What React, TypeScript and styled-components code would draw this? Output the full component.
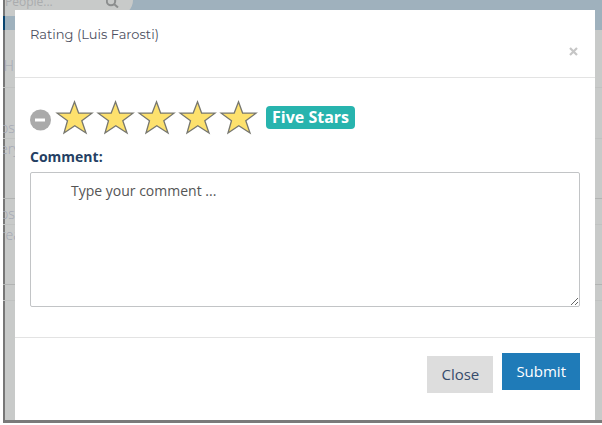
import React, { useState } from "react";
import styled, { createGlobalStyle } from "styled-components";

const GlobalStyle = createGlobalStyle`
  * { box-sizing: border-box; }
  body {
    margin: 0;
    background: #fff;
    color: #243f63;
    font-family: "Open Sans", "Noto Sans", sans-serif;
    font-size: 14px;
    line-height: 20px;
  }
  button, textarea, input { font-family: inherit; }
`;

const Screen = styled.div`
  position: relative;
  margin-left: 3px;
  padding: 10px 7px 0 10px;
  border-left: 2px solid #777;
  border-bottom: 3px solid #7a7a7a;
  background: #c8cac9;
`;

const Backdrop = styled.div`
  position: absolute;
  inset: 0 0 0 -2px;
  overflow: hidden;
  color: #a3a7b4;
`;

const TopBar = styled.div`
  height: 30px;
  border-left: 2px solid #07436f;
  background: #9fb1bd;
`;

const SearchBox = styled.div`
  display: flex;
  align-items: flex-start;
  justify-content: space-between;
  width: 130px;
  height: 16px;
  margin-left: -2px;
  padding-right: 14px;
  border-left: 2px solid #777;
  border-radius: 0 0 16px 0;
  background: #c8cac9;
  color: #aaacae;
  font-size: 12px;
  line-height: 4px;
`;

const SearchIcon = styled.svg`
  width: 13px;
  height: 8px;
`;

const Feed = styled.div`
  margin-left: -3px;
  font-weight: 300;
`;

const FeedRow = styled.div<{ $height: number; $faint?: boolean; $align?: string; $inset?: number }>`
  display: flex;
  align-items: ${(p) => p.$align ?? "flex-end"};
  height: ${(p) => p.$height}px;
  padding-bottom: ${(p) => p.$inset ?? 0}px;
  border-bottom: 1px solid ${(p) => (p.$faint ? "#c0c2c1" : "#b2b4b3")};
`;

const Dialog = styled.form`
  position: relative;
  background: #fff;
`;

const Header = styled.header`
  display: flex;
  justify-content: space-between;
  height: 68px;
  padding: 14px 15px;
  border-bottom: 1px solid #e3e3e3;
`;

const Title = styled.h1`
  margin: 0;
  color: #4d5061;
  font-family: Montserrat, Inter, sans-serif;
  font-size: 13px;
  font-weight: 400;
  line-height: 20px;
`;

const Dismiss = styled.button`
  align-self: flex-end;
  width: 13px;
  height: 24px;
  padding: 0;
  border: 0;
  background: none;
  cursor: pointer;
`;

const Body = styled.div`
  padding: 20px 15px 30px;
`;

const RatingRow = styled.div`
  display: flex;
  align-items: center;
  height: 44px;
`;

const ClearButton = styled.button`
  width: 22px;
  height: 22px;
  margin-right: 3px;
  padding: 0;
  border: 0;
  background: none;
  cursor: pointer;
`;

const StarButton = styled.button`
  width: 41px;
  height: 42px;
  padding: 0 0 4px;
  border: 0;
  background: none;
  cursor: pointer;
`;

const Glyph = styled.svg`
  display: block;
`;

const Badge = styled.span`
  align-self: flex-start;
  margin: 8px 0 0 6px;
  padding: 0 6px;
  border-radius: 4px;
  background: #27b4ae;
  color: #fff;
  font-size: 16px;
  font-weight: 700;
  line-height: 23px;
`;

const Label = styled.label`
  display: block;
  margin: 5px 0;
  font-weight: 700;
`;

const Comment = styled.textarea`
  display: block;
  width: 100%;
  height: 135px;
  padding: 8px 40px;
  border: 1px solid #c2c4c6;
  border-radius: 2px;
  background: #fff;
  color: #555;
  font-size: 14px;
  line-height: 20px;
  resize: both;
  outline: 0;
  &::placeholder { color: #555; opacity: 1; }
`;

const Footer = styled.footer`
  display: flex;
  justify-content: flex-end;
  align-items: flex-start;
  gap: 9px;
  height: 83px;
  padding: 15px;
  border-top: 1px solid #e3e3e3;
`;

const Action = styled.button<{ $primary?: boolean }>`
  min-width: 66px;
  height: 37px;
  margin-top: ${(p) => (p.$primary ? 0 : 3)}px;
  padding: 0 14px 2px;
  border: 0;
  background: ${(p) => (p.$primary ? "#1f7bb8" : "#dddddd")};
  color: ${(p) => (p.$primary ? "#fff" : "#364b6b")};
  font-size: 15px;
  font-weight: ${(p) => (p.$primary ? 500 : 400)};
  cursor: pointer;
`;

const captions = ["Not Rated", "One Star", "Two Stars", "Three Stars", "Four Stars", "Five Stars"];

function Star({ filled }: { filled: boolean }) {
  return (
    <Glyph width="41" height="38" viewBox="0 0 41 38" aria-hidden="true">
      <path
        d="M19.5 2.8 L23.6 14 L37 14.2 L26.8 21.8 L31 34 L19.8 26.8 L9 34 L12.5 21.8 L2.2 14.2 L15.2 14 Z"
        fill={filled ? "#fde16d" : "#fff"}
        stroke="#77776f"
        strokeWidth="1.3"
      />
    </Glyph>
  );
}

export default function App() {
  const [rating, setRating] = useState(5);
  return (
    <>
      <GlobalStyle />
      <Screen>
        <Backdrop aria-hidden="true">
          <TopBar>
            <SearchBox>
              <span>People...</span>
              <SearchIcon viewBox="0 0 13 8">
                <circle cx="5" cy="1" r="4.2" fill="none" stroke="#8c8e8e" strokeWidth="2" />
                <path d="M8 4 L12 7.5" stroke="#8c8e8e" strokeWidth="2" />
              </SearchIcon>
            </SearchBox>
          </TopBar>
          <Feed>
            <FeedRow $height={58} $inset={11} $faint>&nbsp;H</FeedRow>
            <FeedRow $height={51} $faint>ost</FeedRow>
            <FeedRow $height={60} $align="flex-start">ery</FeedRow>
            <FeedRow $height={26} $faint>ost</FeedRow>
            <FeedRow $height={60} $align="flex-start">rea</FeedRow>
            <FeedRow $height={16} $faint />
          </Feed>
        </Backdrop>
        <Dialog role="dialog" aria-labelledby="rating-title" onSubmit={(e) => e.preventDefault()}>
          <Header>
            <Title id="rating-title">Rating (Luis Farosti)</Title>
            <Dismiss type="button" aria-label="Dismiss">
              <Glyph width="13" height="13" viewBox="0 0 13 13">
                <path d="M3 3 L10 10 M10 3 L3 10" stroke="#c6c6c6" strokeWidth="2.2" />
              </Glyph>
            </Dismiss>
          </Header>
          <Body>
            <RatingRow>
              <ClearButton type="button" aria-label="Clear rating" onClick={() => setRating(0)}>
                <Glyph width="22" height="22" viewBox="0 0 22 22">
                  <circle cx="10.5" cy="11" r="10.5" fill="#aaa" />
                  <path d="M5 11 H15" stroke="#fff" strokeWidth="3" />
                </Glyph>
              </ClearButton>
              {[1, 2, 3, 4, 5].map((n) => (
                <StarButton key={n} type="button" aria-label={captions[n]} onClick={() => setRating(n)}>
                  <Star filled={n <= rating} />
                </StarButton>
              ))}
              <Badge>{captions[rating]}</Badge>
            </RatingRow>
            <Label htmlFor="comment">Comment:</Label>
            <Comment id="comment" placeholder="Type your comment ..." />
          </Body>
          <Footer>
            <Action type="button">Close</Action>
            <Action type="submit" $primary>Submit</Action>
          </Footer>
        </Dialog>
      </Screen>
    </>
  );
}
